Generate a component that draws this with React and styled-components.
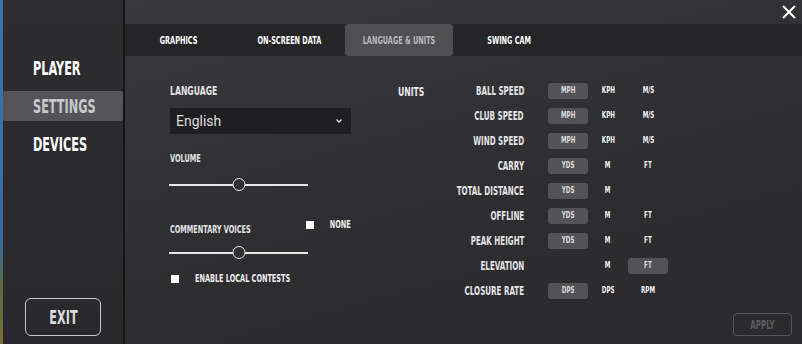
import styled, { createGlobalStyle } from "styled-components";

const GlobalStyle = createGlobalStyle`
  html, body {
    margin: 0;
    padding: 0;
    background: #1c1c1e;
  }
  #root {
    width: 802px;
    height: 344px;
    overflow: hidden;
  }
`;

const narrow = `"DejaVu Sans Condensed", "Liberation Sans", sans-serif`;

// the game font is very condensed; squeeze the condensed face horizontally
const Txt = styled.span`
  display: inline-block;
  white-space: nowrap;
  transform: scaleX(${(p) => p.$sx || 0.66});
  transform-origin: ${(p) => p.$o || "left"} center;
`;

const Screen = styled.div`
  display: flex;
  width: 802px;
  height: 344px;
  font-family: ${narrow};
  font-weight: bold;
  color: #ececec;
`;

const Backdrop = styled.div`
  width: 3px;
  background: linear-gradient(180deg, #3f74a8 0%, #3a6a9a 70%, #5f6a3a 85%, #7a6e3c 100%);
`;

const Sidebar = styled.nav`
  width: 120px;
  display: flex;
  flex-direction: column;
  background: linear-gradient(180deg, #2d2d30 0%, #29292b 100%);
  border-right: 2px solid #151516;
`;

const NavList = styled.div`
  display: flex;
  flex-direction: column;
  gap: 8px;
  margin-top: 53px;
  flex: 1;
`;

const NavItem = styled.div`
  height: 30px;
  display: flex;
  align-items: center;
  padding-left: 30px;
  font-size: 19px;
  color: ${(p) => (p.$active ? "#c9c9cc" : "#ffffff")};
  background: ${(p) => (p.$active ? "#545458" : "transparent")};
  border-radius: 2px;
`;

const ExitButton = styled.button`
  align-self: flex-start;
  margin: 0 0 8px 22px;
  width: 76px;
  height: 38px;
  padding: 0;
  border: 1.5px solid #c8c8cb;
  border-radius: 6px;
  background: transparent;
  color: #dcdcdc;
  font-family: ${narrow};
  font-weight: bold;
  font-size: 19px;
`;

const Main = styled.main`
  flex: 1;
  display: flex;
  flex-direction: column;
  background: linear-gradient(165deg, #38383d 0%, #313135 40%, #2e2e31 55%, #2a2a2d 100%);
`;

const TopBar = styled.div`
  height: 24px;
  display: flex;
  justify-content: flex-end;
  align-items: center;
  padding-right: 5px;
`;

const TabBar = styled.div`
  height: 32px;
  display: flex;
  gap: 2px;
  background: #252528;
`;

const Tab = styled.div`
  width: 108px;
  display: flex;
  align-items: center;
  justify-content: center;
  font-size: 11px;
  color: ${(p) => (p.$active ? "#b9b9bd" : "#ffffff")};
  background: ${(p) => (p.$active ? "#505054" : "transparent")};
  border-radius: 3px;
`;

const Content = styled.div`
  flex: 1;
  display: flex;
  padding: 22px 0 0 45px;
`;

const LeftColumn = styled.div`
  width: 181px;
  display: flex;
  flex-direction: column;
`;

const Label = styled.div`
  font-size: ${(p) => p.$size || 11}px;
  color: #e4e4e6;
`;

const Select = styled.div`
  margin-top: 10px;
  height: 26px;
  display: flex;
  align-items: center;
  justify-content: space-between;
  padding: 0 8px 0 6px;
  background: #1f1f21;
  font-family: Roboto, "Liberation Sans", sans-serif;
  font-weight: normal;
  font-size: 14px;
  color: #dddddd;
`;

const Slider = styled.div`
  position: relative;
  width: 139px;
  height: 14px;
  margin-left: -1px;
  margin-top: ${(p) => p.$top || 0}px;

  &::before {
    content: "";
    position: absolute;
    left: 0;
    right: 0;
    top: 6px;
    height: 1.5px;
    background: #e8e8e8;
  }
`;

const Thumb = styled.div`
  position: absolute;
  top: 0;
  width: 11px;
  height: 11px;
  border: 1.5px solid #e8e8e8;
  border-radius: 50%;
  background: #2f2f32;
  transform: translateX(-50%);
`;

const VoicesRow = styled.div`
  display: flex;
  justify-content: space-between;
  align-items: flex-start;
  margin-top: 26px;
`;

const CheckRow = styled.div`
  display: flex;
  align-items: center;
  gap: ${(p) => p.$gap || 16}px;
  margin-top: ${(p) => p.$top || 0}px;
  margin-left: ${(p) => p.$left || 0}px;
  font-size: 11px;
  color: #f0f0f0;
`;

const Box = styled.span`
  width: 8px;
  height: 8px;
  background: #ffffff;
`;

const RightColumn = styled.div`
  margin-left: 47px;
  display: flex;
`;

const UnitsTitle = styled.div`
  width: 43px;
  font-size: 13px;
  padding-top: 6px;
  color: #ececec;
`;

const UnitsGrid = styled.div`
  display: grid;
  grid-template-columns: 107px repeat(3, 40px);
  grid-auto-rows: 25px;
`;

const RowLabel = styled.div`
  display: flex;
  align-items: center;
  justify-content: flex-end;
  padding-right: 24px;
  font-size: 12px;
  color: #e4e4e6;
`;

const UnitCell = styled.div`
  display: flex;
  align-items: center;
  justify-content: center;

  & > div {
    width: 40px;
    height: 16px;
    display: flex;
    align-items: center;
    justify-content: center;
    border-radius: 3px;
    font-size: 8px;
    color: ${(p) => (p.$selected ? "#dcdcdc" : "#f4f4f4")};
    background: ${(p) => (p.$selected ? "#535357" : "transparent")};
  }
`;

const Footer = styled.div`
  display: flex;
  justify-content: flex-end;
  padding: 0 10px 8px 0;
`;

const ApplyButton = styled.button`
  width: 59px;
  height: 23px;
  padding: 0;
  border: 1.5px solid #56565a;
  border-radius: 4px;
  background: transparent;
  color: #5c5c60;
  font-family: ${narrow};
  font-weight: bold;
  font-size: 12px;
`;

const units = [
  { label: "BALL SPEED", opts: ["MPH", "KPH", "M/S"], sel: 0 },
  { label: "CLUB SPEED", opts: ["MPH", "KPH", "M/S"], sel: 0 },
  { label: "WIND SPEED", opts: ["MPH", "KPH", "M/S"], sel: 0 },
  { label: "CARRY", opts: ["YDS", "M", "FT"], sel: 0 },
  { label: "TOTAL DISTANCE", opts: ["YDS", "M", ""], sel: 0 },
  { label: "OFFLINE", opts: ["YDS", "M", "FT"], sel: 0 },
  { label: "PEAK HEIGHT", opts: ["YDS", "M", "FT"], sel: 0 },
  { label: "ELEVATION", opts: ["", "M", "FT"], sel: 2 },
  { label: "CLOSURE RATE", opts: ["DPS", "DPS", "RPM"], sel: 0 },
];

function CloseIcon() {
  return (
    <svg width="16" height="16" viewBox="0 0 16 16">
      <path d="M2 2 L14 14 M14 2 L2 14" stroke="#ffffff" strokeWidth="2" />
    </svg>
  );
}

function Chevron() {
  return (
    <svg width="8" height="6" viewBox="0 0 8 6">
      <path d="M1.5 1.5 L4 4 L6.5 1.5" stroke="#dddddd" strokeWidth="1.3" fill="none" />
    </svg>
  );
}

export default function App() {
  return (
    <>
      <GlobalStyle />
      <Screen>
        <Backdrop />
        <Sidebar>
          <NavList>
            <NavItem><Txt>PLAYER</Txt></NavItem>
            <NavItem $active><Txt>SETTINGS</Txt></NavItem>
            <NavItem><Txt>DEVICES</Txt></NavItem>
          </NavList>
          <ExitButton><Txt $o="center">EXIT</Txt></ExitButton>
        </Sidebar>
        <Main>
          <TopBar>
            <CloseIcon />
          </TopBar>
          <TabBar>
            <Tab><Txt $o="center">GRAPHICS</Txt></Tab>
            <Tab><Txt $o="center">ON-SCREEN DATA</Txt></Tab>
            <Tab $active><Txt $o="center">LANGUAGE &amp; UNITS</Txt></Tab>
            <Tab><Txt $o="center">SWING CAM</Txt></Tab>
          </TabBar>
          <Content>
            <LeftColumn>
              <Label $size={13} style={{ paddingTop: 5 }}><Txt>LANGUAGE</Txt></Label>
              <Select>
                English
                <Chevron />
              </Select>
              <Label style={{ marginTop: 18 }}><Txt>VOLUME</Txt></Label>
              <Slider $top={13}>
                <Thumb style={{ left: "50%" }} />
              </Slider>
              <VoicesRow>
                <Label style={{ marginTop: 5 }}><Txt>COMMENTARY VOICES</Txt></Label>
                <CheckRow $gap={5}>
                  <Box />
                  <Txt $o="right">NONE</Txt>
                </CheckRow>
              </VoicesRow>
              <Slider $top={10}>
                <Thumb style={{ left: "50%" }} />
              </Slider>
              <CheckRow $top={12} $left={1}>
                <Box />
                <Txt>ENABLE LOCAL CONTESTS</Txt>
              </CheckRow>
            </LeftColumn>
            <RightColumn>
              <UnitsTitle><Txt>UNITS</Txt></UnitsTitle>
              <UnitsGrid>
                {units.map((row) => [
                  <RowLabel key={row.label}><Txt $o="right">{row.label}</Txt></RowLabel>,
                  ...row.opts.map((o, i) => (
                    <UnitCell key={row.label + i} $selected={i === row.sel && o !== ""}>
                      {o && <div><Txt $o="center" $sx={0.78}>{o}</Txt></div>}
                    </UnitCell>
                  )),
                ])}
              </UnitsGrid>
            </RightColumn>
          </Content>
          <Footer>
            <ApplyButton><Txt $o="center">APPLY</Txt></ApplyButton>
          </Footer>
        </Main>
      </Screen>
    </>
  );
}
